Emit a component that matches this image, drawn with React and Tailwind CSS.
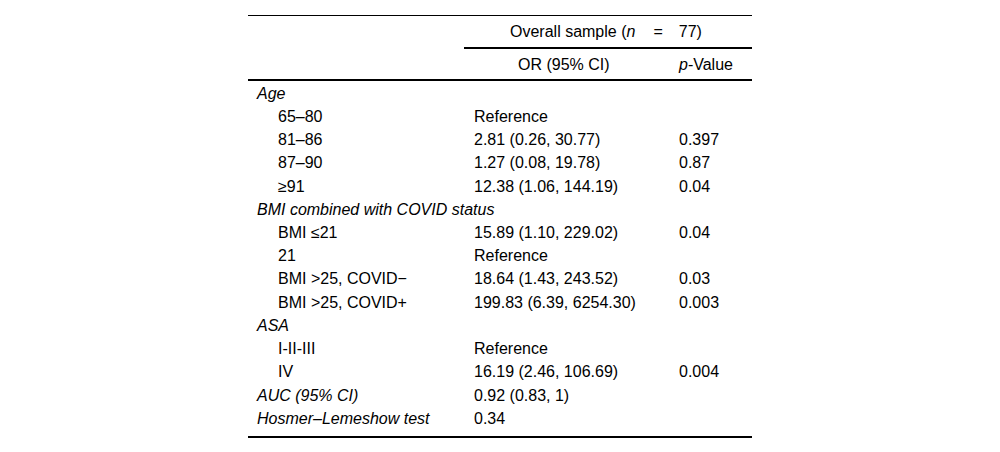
import React from "react";

const rows = [
  { label: "Age", head: true },
  { label: "65–80", or: "Reference" },
  { label: "81–86", or: "2.81 (0.26, 30.77)", p: "0.397" },
  { label: "87–90", or: "1.27 (0.08, 19.78)", p: "0.87" },
  { label: "≥91", or: "12.38 (1.06, 144.19)", p: "0.04" },
  { label: "BMI combined with COVID status", head: true },
  { label: "BMI ≤21", or: "15.89 (1.10, 229.02)", p: "0.04" },
  { label: "21", or: "Reference" },
  { label: "BMI >25, COVID−", or: "18.64 (1.43, 243.52)", p: "0.03" },
  { label: "BMI >25, COVID+", or: "199.83 (6.39, 6254.30)", p: "0.003" },
  { label: "ASA", head: true },
  { label: "I-II-III", or: "Reference" },
  { label: "IV", or: "16.19 (2.46, 106.69)", p: "0.004" },
  { label: "AUC (95% CI)", head: true, or: "0.92 (0.83, 1)" },
  { label: "Hosmer–Lemeshow test", head: true, or: "0.34" },
];

const App = () => {
  return (
    <div className="w-[1000px] h-[452px] bg-white pt-[15px] text-black text-[16px] leading-none" style={{ fontFamily: '"Liberation Sans", Arial, sans-serif' }}>
      <div className="w-[504px] mx-auto border-t border-black border-b-2 pb-[6px]">
        {/* header row 1 */}
        <div className="flex h-[31px] items-center">
          <div className="w-[216px]"></div>
          <div className="flex-1 pl-[46px] flex items-center">
            <span>Overall sample (</span>
            <span className="italic">n</span>
            <span className="ml-[18px] mr-[16px]">=</span>
            <span>77)</span>
          </div>
        </div>
        <div className="flex">
          <div className="w-[216px]"></div>
          <div className="flex-1 border-t-2 border-black"></div>
        </div>
        {/* header row 2 */}
        <div className="flex h-[32px] items-center pt-[1px] border-b-2 border-black">
          <div className="w-[216px]"></div>
          <div className="w-[204px] pl-[54px]">OR (95% CI)</div>
          <div className="flex-1 pl-[11px]"><span className="italic">p</span>-Value</div>
        </div>
        {rows.map((r, i) => (
          <div key={i} className="flex h-[23.24px] items-center pt-[2px]">
            <div className={r.head ? "w-[216px] pl-[9px] italic whitespace-nowrap" : "w-[216px] pl-[30px] whitespace-nowrap"}>{r.label}</div>
            <div className="w-[204px] pl-[10px] whitespace-nowrap">{r.or}</div>
            <div className="flex-1 pl-[11px]">{r.p}</div>
          </div>
        ))}
      </div>
    </div>
  );
};

export default App;
